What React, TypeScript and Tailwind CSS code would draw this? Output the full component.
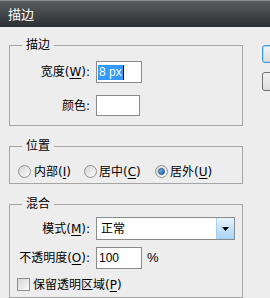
import React from "react";

const FONT = '"DejaVu Sans", "Noto Sans CJK SC", sans-serif';

function U({ c }: { c: string }) {
  return <span className="underline decoration-1 underline-offset-[2px]">{c}</span>;
}

function Legend({ text }: { text: string }) {
  return (
    <span className="absolute left-[12px] top-[-9px] bg-[#ededed] px-[4px] text-[12px] leading-[16px] text-black">
      {text}
    </span>
  );
}

function Radio({ checked }: { checked?: boolean }) {
  return (
    <span className="flex h-[13px] w-[13px] shrink-0 items-center justify-center rounded-full border border-[#8f8f8f] bg-gradient-to-br from-[#d4d4d4] to-[#fbfbfb]">
      {checked && (
        <span className="h-[7px] w-[7px] rounded-full border border-[#1b4f86] bg-gradient-to-br from-[#7ec3f5] to-[#1d5fa6]" />
      )}
    </span>
  );
}

export default function App() {
  return (
    <div
      className="h-[298px] w-[270px] overflow-hidden bg-[#ededed] text-[12px] text-black"
      style={{ fontFamily: FONT }}
    >
      {/* title bar */}
      <div className="flex h-[27px] items-center border-t border-[#8d8d8d] bg-gradient-to-b from-[#5a5e61] to-[#2c2f32] pl-[8px] text-[13px] leading-none text-white">
        描边
      </div>

      <div className="flex pl-[9px] pt-[18px]">
        {/* left column */}
        <div className="flex w-[234px] shrink-0 flex-col gap-[20px]">
          {/* group 1 */}
          <div className="relative h-[81px] border border-[#a5a5a5]">
            <Legend text="描边" />
            <div className="flex flex-col gap-[12px] pt-[15px]">
              <div className="flex h-[22px] items-center">
                <span className="w-[80px] text-right">
                  宽度(<U c="W" />):
                </span>
                <div className="ml-[6px] flex h-[22px] w-[46px] items-center border border-[#8a8a8a] bg-white pl-[1px]">
                  <span
                    className="bg-[#3399ff] px-[1px] text-[12px] leading-[15px] text-white"
                    style={{ fontFamily: '"Liberation Sans", sans-serif' }}
                  >
                    8 px
                  </span>
                  <span className="h-[15px] w-[1px] bg-black" />
                </div>
              </div>
              <div className="flex h-[21px] items-center">
                <span className="w-[80px] text-right">颜色:</span>
                <div className="ml-[6px] h-[21px] w-[44px] border border-[#8a8a8a] bg-white" />
              </div>
            </div>
          </div>

          {/* group 2 */}
          <div className="relative h-[38px] border border-[#a5a5a5]">
            <Legend text="位置" />
            <div className="mt-[18px] flex h-[13px] items-center pl-[8px]">
              <div className="flex w-[66px] items-center gap-[3px]">
                <Radio />
                <span>
                  内部(<U c="I" />)
                </span>
              </div>
              <div className="flex w-[71px] items-center gap-[2px]">
                <Radio />
                <span>
                  居中(<U c="C" />)
                </span>
              </div>
              <div className="flex items-center gap-[2px]">
                <Radio checked />
                <span>
                  居外(<U c="U" />)
                </span>
              </div>
            </div>
          </div>

          {/* group 3 */}
          <div className="relative h-[94px] border border-[#a5a5a5]">
            <Legend text="混合" />
            <div className="flex flex-col pt-[12px]">
              <div className="flex h-[23px] items-center">
                <span className="w-[80px] text-right">
                  模式(<U c="M" />):
                </span>
                <div className="ml-[6px] flex h-[23px] w-[139px] items-stretch border border-[#8a8a8a] bg-white">
                  <span className="flex flex-1 items-center pl-[4px]">正常</span>
                  <span className="flex w-[18px] items-center justify-center border-l border-[#a9cfee] bg-gradient-to-b from-[#e6f3fd] to-[#a6d2f4]">
                    <svg width="7" height="4" viewBox="0 0 7 4">
                      <path d="M0 0H7L3.5 4Z" fill="#000" />
                    </svg>
                  </span>
                </div>
              </div>
              <div className="mt-[7px] flex h-[22px] items-center">
                <span className="w-[80px] whitespace-nowrap text-right">
                  不透明度(<U c="O" />):
                </span>
                <div
                  className="ml-[6px] flex h-[22px] w-[46px] items-center border border-[#8a8a8a] bg-white pl-[2px]"
                  style={{ fontFamily: '"Liberation Sans", sans-serif' }}
                >
                  100
                </div>
                <span
                  className="ml-[5px] text-[13px]"
                  style={{ fontFamily: '"Liberation Sans", sans-serif' }}
                >
                  %
                </span>
              </div>
              <div className="mt-[9px] flex h-[13px] items-center pl-[7px]">
                <span className="h-[13px] w-[13px] shrink-0 border border-[#8e8f8f] bg-gradient-to-br from-[#d6d6d6] to-[#fbfbfb]" />
                <span className="ml-[3px]">
                  保留透明区域(<U c="P" />)
                </span>
              </div>
            </div>
          </div>
        </div>

        {/* right column buttons (clipped) */}
        <div className="ml-[19px] flex shrink-0 flex-col gap-[9px]">
          <div className="h-[18px] w-[75px] rounded-[3px] border border-[#3c9ad6] bg-gradient-to-b from-[#f4f4f4] to-[#dcdcdc] shadow-[inset_0_0_0_1px_#a6dcf5]" />
          <div className="h-[19px] w-[75px] rounded-[3px] border border-[#707070] bg-gradient-to-b from-[#f4f4f4] to-[#dcdcdc]" />
        </div>
      </div>
    </div>
  );
}
